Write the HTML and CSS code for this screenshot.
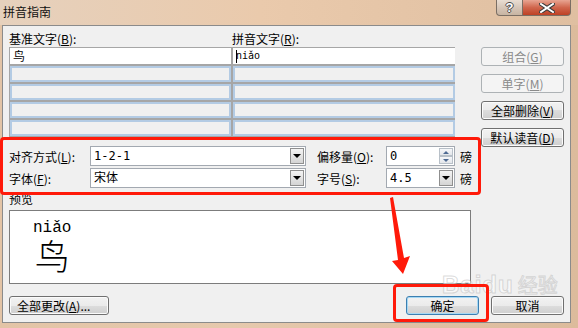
FILE: index.html
```html
<!DOCTYPE html>
<html lang="zh-CN">
<head>
    <meta charset="UTF-8">
    <title>拼音指南</title>
    <link rel="stylesheet" href="styles.css">
</head>
<body>
    <div class="window">
        <!-- 标题栏 -->
        <div class="titlebar">
            <span class="title">拼音指南</span>
            <div class="caption-btns">
                <div class="cap-btn help"><span>?</span></div>
                <div class="cap-btn close">
                    <svg viewBox="0 0 16 10" width="16" height="10">
                        <path d="M2 1 L14 9 M14 1 L2 9" stroke="#3a3a3a" stroke-width="4" stroke-linecap="square"></path>
                        <path d="M2 1 L14 9 M14 1 L2 9" stroke="#ffffff" stroke-width="2" stroke-linecap="square"></path>
                    </svg>
                </div>
            </div>
        </div>

        <div class="client">
            <div class="main">
                <div class="left">
                    <div class="col-labels">
                        <span class="col-label">基准文字(<u>B</u>):</span>
                        <span>拼音文字(<u>R</u>):</span>
                    </div>
                    <div class="ruby-grid">
                        <div class="cell first">鸟</div>
                        <div class="cell first"><span class="caret"></span><span class="pinyin-small">niǎo</span></div>
                        <div class="cell"></div><div class="cell"></div>
                        <div class="cell"></div><div class="cell"></div>
                        <div class="cell"></div><div class="cell"></div>
                        <div class="cell"></div><div class="cell"></div>
                    </div>

                    <div class="options">
                        <div class="opt-row">
                            <span class="opt-label">对齐方式(<u>L</u>):</span>
                            <div class="combo wide">
                                <span class="combo-text">1-2-1</span>
                                <span class="drop"><span class="tri"></span></span>
                            </div>
                            <span class="opt-label second">偏移量(<u>O</u>):</span>
                            <div class="combo narrow">
                                <span class="combo-text">0</span>
                                <span class="spin">
                                    <span class="spin-half"><span class="tri-up"></span></span>
                                    <span class="spin-half"><span class="tri-down"></span></span>
                                </span>
                            </div>
                            <span class="unit">磅</span>
                        </div>
                        <div class="opt-row">
                            <span class="opt-label">字体(<u>F</u>):</span>
                            <div class="combo wide">
                                <span class="combo-text">宋体</span>
                                <span class="drop"><span class="tri"></span></span>
                            </div>
                            <span class="opt-label second">字号(<u>S</u>):</span>
                            <div class="combo narrow">
                                <span class="combo-text">4.5</span>
                                <span class="drop"><span class="tri"></span></span>
                            </div>
                            <span class="unit">磅</span>
                        </div>
                    </div>

                    <div class="preview-label">预览</div>
                    <div class="preview">
                        <div class="ruby">
                            <span class="ruby-top">niǎo</span>
                            <span class="ruby-base">鸟</span>
                        </div>
                    </div>
                </div>

                <div class="side-btns">
                    <div class="btn disabled">组合(<u>G</u>)</div>
                    <div class="btn disabled">单字(<u>M</u>)</div>
                    <div class="btn">全部删除(<u>V</u>)</div>
                    <div class="btn">默认读音(<u>D</u>)</div>
                </div>
            </div>

            <div class="bottom">
                <div class="btn change-all">全部更改(<u>A</u>)...</div>
                <div class="bottom-right">
                    <div class="btn default">确定</div>
                    <div class="btn">取消</div>
                </div>
            </div>
        </div>

        <!-- 标注 -->
        <div class="watermark">
            <span class="wm-en">Baidu</span><span class="wm-cn">经验</span>
        </div>
        <div class="mark mark-options"></div>
        <div class="mark mark-ok"></div>
        <svg class="arrow" viewBox="0 0 578 328" width="578" height="328">
            <polygon points="390,198 393,197 404,258 410,256 403,274 392,261 398,260" fill="#ff1a0a"></polygon>
        </svg>
    </div>
</body>
</html>
```

FILE: styles.css
```css
* {
    margin: 0;
    padding: 0;
    box-sizing: border-box;
}

body {
    width: 578px;
    height: 328px;
    overflow: hidden;
    font-family: 'Noto Sans CJK SC', 'Liberation Sans', sans-serif;
    font-size: 12px;
    color: #000000;
}

u {
    text-decoration: underline;
}

.window {
    position: relative;
    width: 578px;
    height: 328px;
    background: linear-gradient(90deg, #e3c4a6, #e6c9ad 40%, #dcbb9c 100%);
}

/* 标题栏 */
.titlebar {
    height: 25px;
    display: flex;
    justify-content: space-between;
    align-items: flex-start;
    background: linear-gradient(90deg, #e6d1bd, #eacaac 45%, #dfbfa1 100%);
}

.title {
    padding: 4px 0 0 3px;
    line-height: 16px;
    color: #111111;
}

.caption-btns {
    display: flex;
    margin-right: 7px;
}

.cap-btn {
    height: 16px;
    border: 1px solid #7a6e64;
    border-top: none;
    display: flex;
    align-items: center;
    justify-content: center;
}

.help {
    width: 27px;
    border-radius: 0 0 0 4px;
    background: linear-gradient(#e9ddd2, #d6c6b8 50%, #c8b4a2);
}

.help span {
    font-family: 'Liberation Sans', sans-serif;
    font-weight: bold;
    font-size: 13px;
    line-height: 14px;
    color: #ffffff;
    text-shadow: 1px 0 #4a4a4a, -1px 0 #4a4a4a, 0 1px #4a4a4a, 0 -1px #4a4a4a;
}

.close {
    width: 48px;
    border-left: none;
    border-radius: 0 0 4px 0;
    background: linear-gradient(#e8a592, #d0664d 50%, #bd4125);
}

/* 客户区 */
.client {
    margin-left: 2px;
    width: 569px;
    height: 298px;
    border: 1px solid #8b8b8b;
    background: #f0f0f0;
    padding: 5px 6px 0 6px;
}

.main {
    display: flex;
}

.left {
    width: 472px;
}

.col-labels {
    display: flex;
    line-height: 16px;
}

.col-label {
    width: 223px;
}

.ruby-grid {
    width: 446px;
    display: grid;
    grid-template-columns: 221px 222px;
    grid-auto-rows: 16px;
    gap: 2px;
    padding: 1px;
    background: #a6a6a6;
}

.cell {
    background: #f0f0f0;
    border: 2px solid #b3cbe4;
}

.cell.first {
    background: #ffffff;
    border: none;
    padding-left: 3px;
    line-height: 16px;
    display: flex;
    align-items: center;
}

.caret {
    width: 1px;
    height: 13px;
    background: #000000;
    margin-right: -1px;
}

.pinyin-small {
    font-family: 'DejaVu Sans Mono', monospace;
    font-size: 10px;
}

/* 对齐方式等选项 */
.options {
    margin-top: 9px;
    display: flex;
    flex-direction: column;
    gap: 2px;
}

.opt-row {
    display: flex;
    align-items: center;
    height: 20px;
}

.opt-label {
    width: 81px;
}

.opt-label.second {
    width: 69px;
    margin-left: 11px;
}

.combo {
    height: 20px;
    border: 1px solid #a3a9b1;
    background: #ffffff;
    display: flex;
    align-items: stretch;
    justify-content: space-between;
    padding: 1px;
}

.combo.wide {
    width: 216px;
}

.combo.narrow {
    width: 69px;
}

.combo-text {
    padding-left: 2px;
    line-height: 16px;
    font-family: 'DejaVu Sans Mono', 'Noto Sans CJK SC', monospace;
    font-size: 12px;
}

.drop {
    width: 14px;
    border: 1px solid #8f8f8f;
    background: linear-gradient(#f4f4f4, #e4e4e4 50%, #d4d4d4);
    display: flex;
    align-items: center;
    justify-content: center;
}

.tri {
    width: 0;
    height: 0;
    border-left: 4px solid transparent;
    border-right: 4px solid transparent;
    border-top: 4px solid #000000;
}

.spin {
    width: 14px;
    display: flex;
    flex-direction: column;
}

.spin-half {
    flex: 1;
    border: 1px solid #b8c0c8;
    background: linear-gradient(#f6f7f9, #e3e6ea);
    display: flex;
    align-items: center;
    justify-content: center;
}

.tri-up {
    border-left: 3px solid transparent;
    border-right: 3px solid transparent;
    border-bottom: 3px solid #4e6a92;
}

.tri-down {
    border-left: 3px solid transparent;
    border-right: 3px solid transparent;
    border-top: 3px solid #4e6a92;
}

.unit {
    margin-left: 5px;
}

/* 预览 */
.preview-label {
    margin-top: 3px;
    line-height: 16px;
}

.preview {
    margin-top: 3px;
    width: 462px;
    height: 74px;
    border: 1px solid #7c7c7c;
    background: #ffffff;
    padding: 7px 0 0 23px;
}

.ruby {
    display: inline-flex;
    flex-direction: column;
    align-items: center;
    gap: 1px;
}

.ruby-top {
    font-family: 'Liberation Mono', monospace;
    font-size: 16px;
    line-height: 14px;
}

.ruby-base {
    font-size: 35px;
    line-height: 38px;
    font-weight: 300;
}

/* 按钮 */
.side-btns {
    width: 83px;
    padding-top: 16px;
    display: flex;
    flex-direction: column;
    gap: 8px;
}

.btn {
    height: 19px;
    border: 1px solid #707070;
    border-radius: 3px;
    background: linear-gradient(#f2f2f2, #ebebeb 50%, #dddddd 50%, #cfcfcf);
    box-shadow: inset 0 0 0 1px #fbfbfb;
    text-align: center;
    line-height: 17px;
}

.btn.disabled {
    border-color: #adb2b5;
    background: #f4f4f4;
    color: #8a8a8a;
    box-shadow: none;
}

.bottom {
    margin-top: 12px;
    display: flex;
    justify-content: space-between;
}

.change-all {
    width: 100px;
    text-align: left;
    padding-left: 7px;
}

.bottom-right {
    display: flex;
    gap: 12px;
}

.bottom-right .btn {
    width: 73px;
}

.btn.default {
    border-color: #3c7fb1;
    box-shadow: inset 0 0 0 1px #a6d8f4;
}

/* 红色标注与水印 */
.mark {
    position: absolute;
    border: 3px solid #ff1a0a;
    border-radius: 4px;
}

.mark-options {
    left: 0;
    top: 137px;
    width: 481px;
    height: 58px;
}

.mark-ok {
    left: 393px;
    top: 284px;
    width: 96px;
    height: 38px;
}

.arrow {
    position: absolute;
    left: 0;
    top: 0;
    pointer-events: none;
}

.watermark {
    position: absolute;
    left: 442px;
    top: 272px;
    line-height: 26px;
    color: rgba(255, 255, 255, 0.5);
    -webkit-text-stroke: 1px rgba(175, 175, 175, 0.45);
    white-space: nowrap;
}

.wm-en {
    font-family: 'Liberation Sans', sans-serif;
    font-size: 24px;
    font-weight: bold;
    letter-spacing: 1px;
}

.wm-cn {
    font-size: 20px;
    margin-left: 4px;
}
```
